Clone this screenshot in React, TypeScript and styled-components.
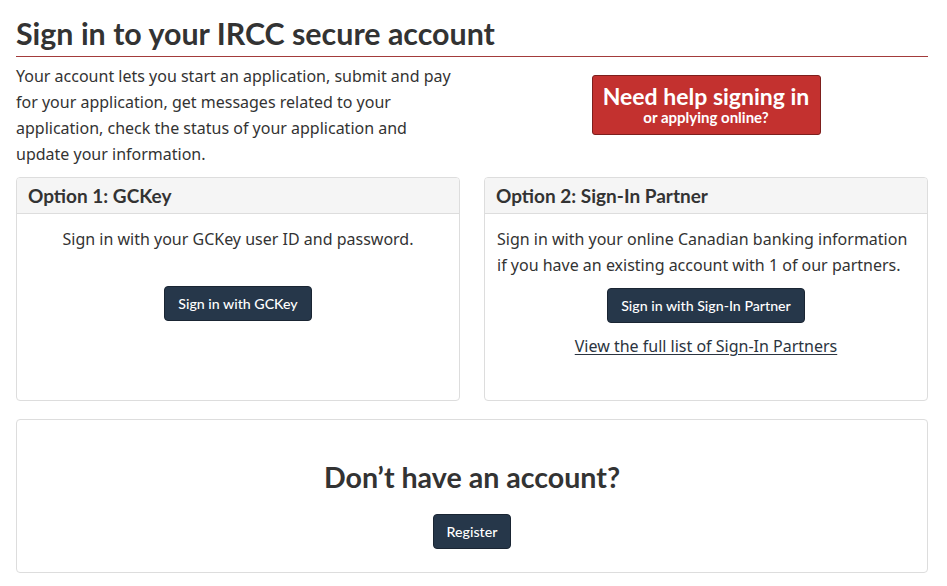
import React from "react";
import styled, { createGlobalStyle } from "styled-components";

const Global = createGlobalStyle`
  html, body { margin: 0; padding: 0; background: #fff; }
  body { font-family: "Noto Sans", sans-serif; color: #333; font-size: 16px; line-height: 26px; }
  * { box-sizing: border-box; }
`;

const Page = styled.main`
  width: 912px;
  margin-left: 16px;
  padding-top: 14px;
`;

const Title = styled.h1`
  font-family: Lato, sans-serif;
  font-weight: 700;
  font-size: 30.4px;
  line-height: 38px;
  color: #333;
  margin: 0;
  padding-bottom: 4px;
  border-bottom: 1px solid #a33b3b;
`;

const TwoCols = styled.div<{ $mt: number }>`
  display: grid;
  grid-template-columns: 444px 444px;
  column-gap: 24px;
  margin-top: ${(p) => p.$mt}px;
`;

const Intro = styled.p`
  margin: 0;
  font-size: 16px;
  line-height: 26px;
`;

const HelpWrap = styled.div`
  display: flex;
  justify-content: center;
  align-items: flex-start;
  padding-top: 12px;
`;

const HelpButton = styled.a`
  display: flex;
  flex-direction: column;
  align-items: center;
  justify-content: center;
  width: 229px;
  height: 60px;
  background: #c3312f;
  border: 1px solid #7d1f1d;
  border-radius: 3px;
  color: #fff;
  font-family: Lato, sans-serif;
  font-weight: 700;
  text-decoration: none;
`;

const HelpBig = styled.span`
  font-size: 23px;
  line-height: 25px;
`;

const HelpSmall = styled.span`
  font-size: 15px;
  line-height: 17px;
`;

const Panel = styled.section`
  border: 1px solid #ddd;
  border-radius: 4px;
  background: #fff;
  display: flex;
  flex-direction: column;
`;

const PanelHead = styled.h2`
  margin: 0;
  background: #f5f5f5;
  border-bottom: 1px solid #ddd;
  border-radius: 3px 3px 0 0;
  font-family: Lato, sans-serif;
  font-weight: 700;
  font-size: 19px;
  line-height: 24px;
  color: #333;
  padding: 6px 11px 5px;
`;

const PanelBody = styled.div<{ $center?: boolean }>`
  padding: 12px 12px 41px;
  text-align: ${(p) => (p.$center ? "center" : "left")};
  display: flex;
  flex-direction: column;
  align-items: ${(p) => (p.$center ? "center" : "stretch")};
`;

const BodyText = styled.p<{ $center?: boolean }>`
  margin: 0;
  font-size: 16px;
  line-height: 26px;
  text-align: ${(p) => (p.$center ? "center" : "left")};
`;

const ButtonRow = styled.div<{ $mt: number }>`
  display: flex;
  justify-content: center;
  margin-top: ${(p) => p.$mt}px;
`;

const DarkButton = styled.a`
  display: inline-flex;
  align-items: center;
  justify-content: center;
  height: 35px;
  padding: 0 13px;
  background: #26374a;
  border: 1px solid #1a2533;
  border-radius: 4px;
  color: #fff;
  font-family: Lato, sans-serif;
  font-size: 14.2px;
  font-weight: 500;
  text-decoration: none;
`;

const LinkRow = styled.p`
  margin: 10px 0 0;
  text-align: center;
  font-size: 16px;
  line-height: 26px;
`;

const PartnerLink = styled.a`
  color: #2b3440;
  text-decoration: underline;
  text-underline-offset: 2px;
`;

const WidePanel = styled.section`
  margin-top: 18px;
  border: 1px solid #ddd;
  border-radius: 4px;
  display: flex;
  flex-direction: column;
  align-items: center;
  padding: 39px 0 23px;
`;

const WideTitle = styled.h2`
  margin: 0;
  font-family: Lato, sans-serif;
  font-weight: 700;
  font-size: 28.6px;
  line-height: 36px;
  color: #333;
`;

export default function App() {
  return (
    <>
      <Global />
      <Page>
        <Title>Sign in to your IRCC secure account</Title>
        <TwoCols $mt={6}>
          <Intro>
            Your account lets you start an application, submit and pay for your application, get
            messages related to your application, check the status of your application and update
            your information.
          </Intro>
          <HelpWrap>
            <HelpButton href="#">
              <HelpBig>Need help signing in</HelpBig>
              <HelpSmall>or applying online?</HelpSmall>
            </HelpButton>
          </HelpWrap>
        </TwoCols>
        <TwoCols $mt={10}>
          <Panel>
            <PanelHead>Option 1: GCKey</PanelHead>
            <PanelBody $center>
              <BodyText $center>Sign in with your GCKey user ID and password.</BodyText>
              <ButtonRow $mt={34}>
                <DarkButton href="#">Sign in with GCKey</DarkButton>
              </ButtonRow>
            </PanelBody>
          </Panel>
          <Panel>
            <PanelHead>Option 2: Sign-In Partner</PanelHead>
            <PanelBody>
              <BodyText>
                Sign in with your online Canadian banking information if you have an existing
                account with 1 of our partners.
              </BodyText>
              <ButtonRow $mt={10}>
                <DarkButton href="#">Sign in with Sign-In Partner</DarkButton>
              </ButtonRow>
              <LinkRow>
                <PartnerLink href="#">View the full list of Sign-In Partners</PartnerLink>
              </LinkRow>
            </PanelBody>
          </Panel>
        </TwoCols>
        <WidePanel>
          <WideTitle>Don’t have an account?</WideTitle>
          <ButtonRow $mt={19}>
            <DarkButton href="#">Register</DarkButton>
          </ButtonRow>
        </WidePanel>
      </Page>
    </>
  );
}
